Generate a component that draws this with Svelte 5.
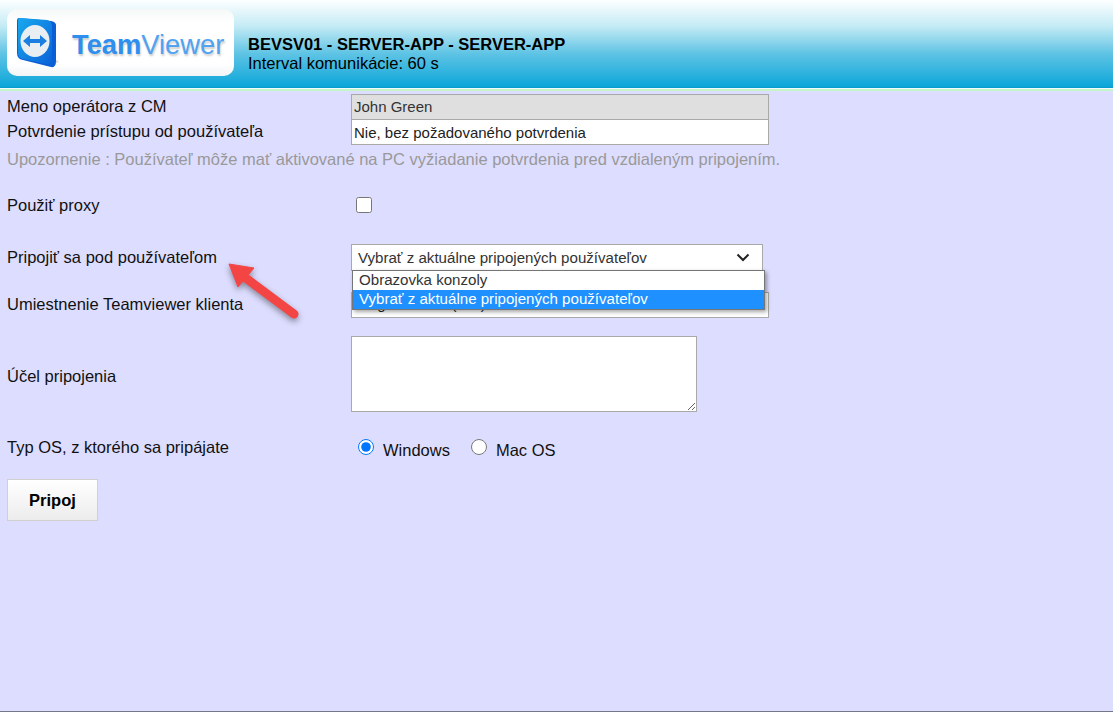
<script>
	let proxy = false;
	let purpose = '';
	let os = 'windows';
	const options = ['Obrazovka konzoly', 'Vybrať z aktuálne pripojených používateľov'];
</script>

<div class="page">
	<header class="top">
		<div class="logo">
			<svg class="mark" width="46" height="54" viewBox="0 0 46 54">
				<defs>
					<linearGradient id="side" x1="0" y1="0" x2="1" y2="1">
						<stop offset="0" stop-color="#19a9ee" />
						<stop offset="1" stop-color="#0a62d8" />
					</linearGradient>
				</defs>
				<path d="M30 50 L44 46 L36 40 Z" fill="#bbb" opacity="0.6" />
				<path d="M4 2 L36 5 Q42 6 41 11 L41 45 Q41 52 36 51 L8 44 Q2 43 2 37 L2 5 Q2 2 4 2 Z" fill="#0b5fd6" />
				<path d="M5 2 L32 4 Q37 5 37 10 L37 44 Q37 49 32 48 L8 43 Q3 42 3 37 L3 5 Q3 2 5 2 Z" fill="url(#side)" />
				<ellipse cx="20" cy="25" rx="14.5" ry="16" fill="#e8eef2" />
				<path d="M8 25 L15 19 L15 23 L25 23 L25 19 L32 25 L25 31 L25 27 L15 27 L15 31 Z" fill="#1a7fe0" />
			</svg>
			<span class="brand"><b>Team</b>Viewer</span>
		</div>
		<div class="title">
			<strong>BEVSV01 - SERVER-APP - SERVER-APP</strong>
			<span>Interval komunikácie: 60 s</span>
		</div>
	</header>

	<main class="form">
		<div class="row first">
			<div class="label">Meno operátora z CM</div>
			<input class="field wide disabled" type="text" value="John Green" readonly />
		</div>
		<div class="row second">
			<div class="label">Potvrdenie prístupu od používateľa</div>
			<input class="field wide" type="text" value="Nie, bez požadovaného potvrdenia" readonly />
		</div>
		<p class="note">Upozornenie : Používateľ môže mať aktivované na PC vyžiadanie potvrdenia pred vzdialeným pripojením.</p>

		<div class="row proxy">
			<div class="label">Použiť proxy</div>
			<input class="check" type="checkbox" bind:checked={proxy} />
		</div>

		<div class="row connect">
			<div class="label">Pripojiť sa pod používateľom</div>
			<div class="select">
				<span>{options[1]}</span>
				<svg width="14" height="9" viewBox="0 0 14 9">
					<path d="M1.5 1.5 L7 7 L12.5 1.5" fill="none" stroke="#222" stroke-width="2" />
				</svg>
				<ul class="menu">
					{#each options as option, i}
						<li class:active={i === 1}>{option}</li>
					{/each}
				</ul>
			</div>
		</div>

		<div class="row place">
			<div class="label">Umiestnenie Teamviewer klienta</div>
			<input class="field wide" type="text" value="Program Files (x86)" readonly />
		</div>

		<div class="row purpose">
			<div class="label">Účel pripojenia</div>
			<textarea class="area" bind:value={purpose}></textarea>
		</div>

		<div class="row os">
			<div class="label">Typ OS, z ktorého sa pripájate</div>
			<div class="radios">
				<label><input type="radio" name="os" value="windows" bind:group={os} /><span>Windows</span></label>
				<label><input type="radio" name="os" value="mac" bind:group={os} /><span>Mac OS</span></label>
			</div>
		</div>

		<button class="submit">Pripoj</button>
	</main>

	<div class="edge"></div>

	<svg class="arrow" width="90" height="76" viewBox="0 0 90 76">
		<path d="M69 54 L22 19" stroke="#f44545" stroke-width="9" stroke-linecap="round" />
		<path d="M4 4 L29 8 L13 27 Z" fill="#f44545" stroke="#f44545" stroke-width="1" stroke-linejoin="round" />
	</svg>
</div>

<style>
	:global(body) {
		margin: 0;
		background: #ddf;
	}

	.page {
		position: relative;
		height: 712px;
		display: flex;
		flex-direction: column;
		overflow: hidden;
		background: #ddf;
		font-family: 'Liberation Sans', Arial, sans-serif;
		font-size: 16.5px;
		color: #111;
	}

	.top {
		flex: none;
		height: 88px;
		display: flex;
		align-items: flex-start;
		box-sizing: border-box;
		padding: 9px 0 0 7px;
		background: linear-gradient(#fdffff 0, #c4ebf5 30%, #5ec3e4 62%, #0ba6d9 100%);
		border-bottom: 1px solid #0a9ccd;
		box-shadow: 0 1px 0 #f2fbff, 0 3px 0 #c4f6c8;
		margin-bottom: 2px;
	}

	.logo {
		width: 227px;
		height: 67px;
		flex: none;
		display: flex;
		align-items: center;
		box-sizing: border-box;
		padding-left: 8px;
		background: linear-gradient(#f6f8f8, #fff 20%, #fff 82%, #f1f4f5);
		border-radius: 10px;
	}

	.mark {
		flex: none;
	}

	.brand {
		margin-left: 11px;
		margin-top: 5px;
		font-size: 27.3px;
		color: #4fa3f2;
		text-shadow: 1px 2px 2px #ccc;
		white-space: nowrap;
	}

	.brand b {
		color: #2f8fee;
		font-weight: bold;
	}

	.title {
		display: flex;
		flex-direction: column;
		margin: 26px 0 0 14px;
		line-height: 19px;
		color: #000;
	}

	.form {
		flex: 1;
		padding: 4px 0 0 7px;
	}

	.row {
		display: flex;
	}

	.label {
		width: 344px;
		flex: none;
	}

	.field {
		box-sizing: border-box;
		height: 26px;
		margin: 0;
		padding: 0 2px;
		border: 1px solid #a9a9a9;
		border-radius: 0;
		outline: none;
		background: #fff;
		font: 15px 'Liberation Sans', Arial, sans-serif;
		color: #222;
	}

	.wide {
		width: 418px;
	}

	.disabled {
		background: #dfdfdf;
		color: #333;
	}

	.first {
		height: 25px;
		align-items: center;
	}

	.second {
		height: 26px;
		align-items: center;
	}

	.second .label,
	.proxy .label,
	.place .label {
		padding-bottom: 2px;
	}

	.note {
		margin: 5px 0 0;
		line-height: 19px;
		color: #999;
	}

	.proxy {
		height: 20px;
		margin-top: 27px;
		align-items: center;
	}

	.check {
		width: 16px;
		height: 16px;
		margin: -2px 0 0 5px;
		accent-color: #0075ff;
	}

	.connect {
		height: 26px;
		margin-top: 28px;
	}

	.connect .label {
		line-height: 26px;
	}

	.select {
		position: relative;
		box-sizing: border-box;
		width: 412px;
		height: 27px;
		display: flex;
		align-items: center;
		justify-content: space-between;
		padding: 0 12px 0 6px;
		border: 1px solid #a9a9a9;
		background: #fff;
		font-size: 15.1px;
		color: #333;
	}

	.menu {
		position: absolute;
		left: 0;
		top: 25px;
		width: 411px;
		margin: 0;
		padding: 0;
		list-style: none;
		background: #fff;
		border: 1px solid #767676;
		box-shadow: 2px 2px 4px rgba(0, 0, 0, 0.35);
		z-index: 2;
	}

	.menu li {
		height: 19px;
		line-height: 17px;
		padding: 0 6px;
		color: #333;
	}

	.menu li.active {
		background: #1e90ff;
		color: #fff;
	}

	.place {
		height: 26px;
		margin-top: 22px;
		align-items: center;
	}

	.place .field {
		padding-bottom: 3px;
	}

	.purpose {
		height: 76px;
		margin-top: 18px;
		align-items: center;
	}

	.purpose .label {
		padding-top: 4px;
	}

	.area {
		box-sizing: border-box;
		width: 346px;
		height: 76px;
		margin: 0;
		border: 1px solid #a9a9a9;
		border-radius: 0;
		outline: none;
		background: #fff;
	}

	.os {
		margin-top: 26px;
		height: 19px;
	}

	.radios {
		display: flex;
		margin: 1px 0 0 7px;
		gap: 21px;
		color: #111;
	}

	.radios label {
		display: flex;
		align-items: flex-start;
	}

	.radios input {
		width: 16px;
		height: 16px;
		margin: 0;
		accent-color: #0075ff;
	}

	.radios span {
		margin: 2px 0 0 9px;
	}

	.submit {
		display: block;
		box-sizing: border-box;
		width: 91px;
		height: 42px;
		margin-top: 22px;
		padding: 0;
		border: 1px solid #d0d0d0;
		background: linear-gradient(#fff, #ececec);
		font: bold 16.5px 'Liberation Sans', Arial, sans-serif;
		color: #000;
	}

	.edge {
		flex: none;
		height: 1px;
		background: #77778a;
	}

	.arrow {
		position: absolute;
		left: 225px;
		top: 260px;
		filter: drop-shadow(0 3px 3px rgba(0, 0, 0, 0.4));
		z-index: 3;
	}
</style>
